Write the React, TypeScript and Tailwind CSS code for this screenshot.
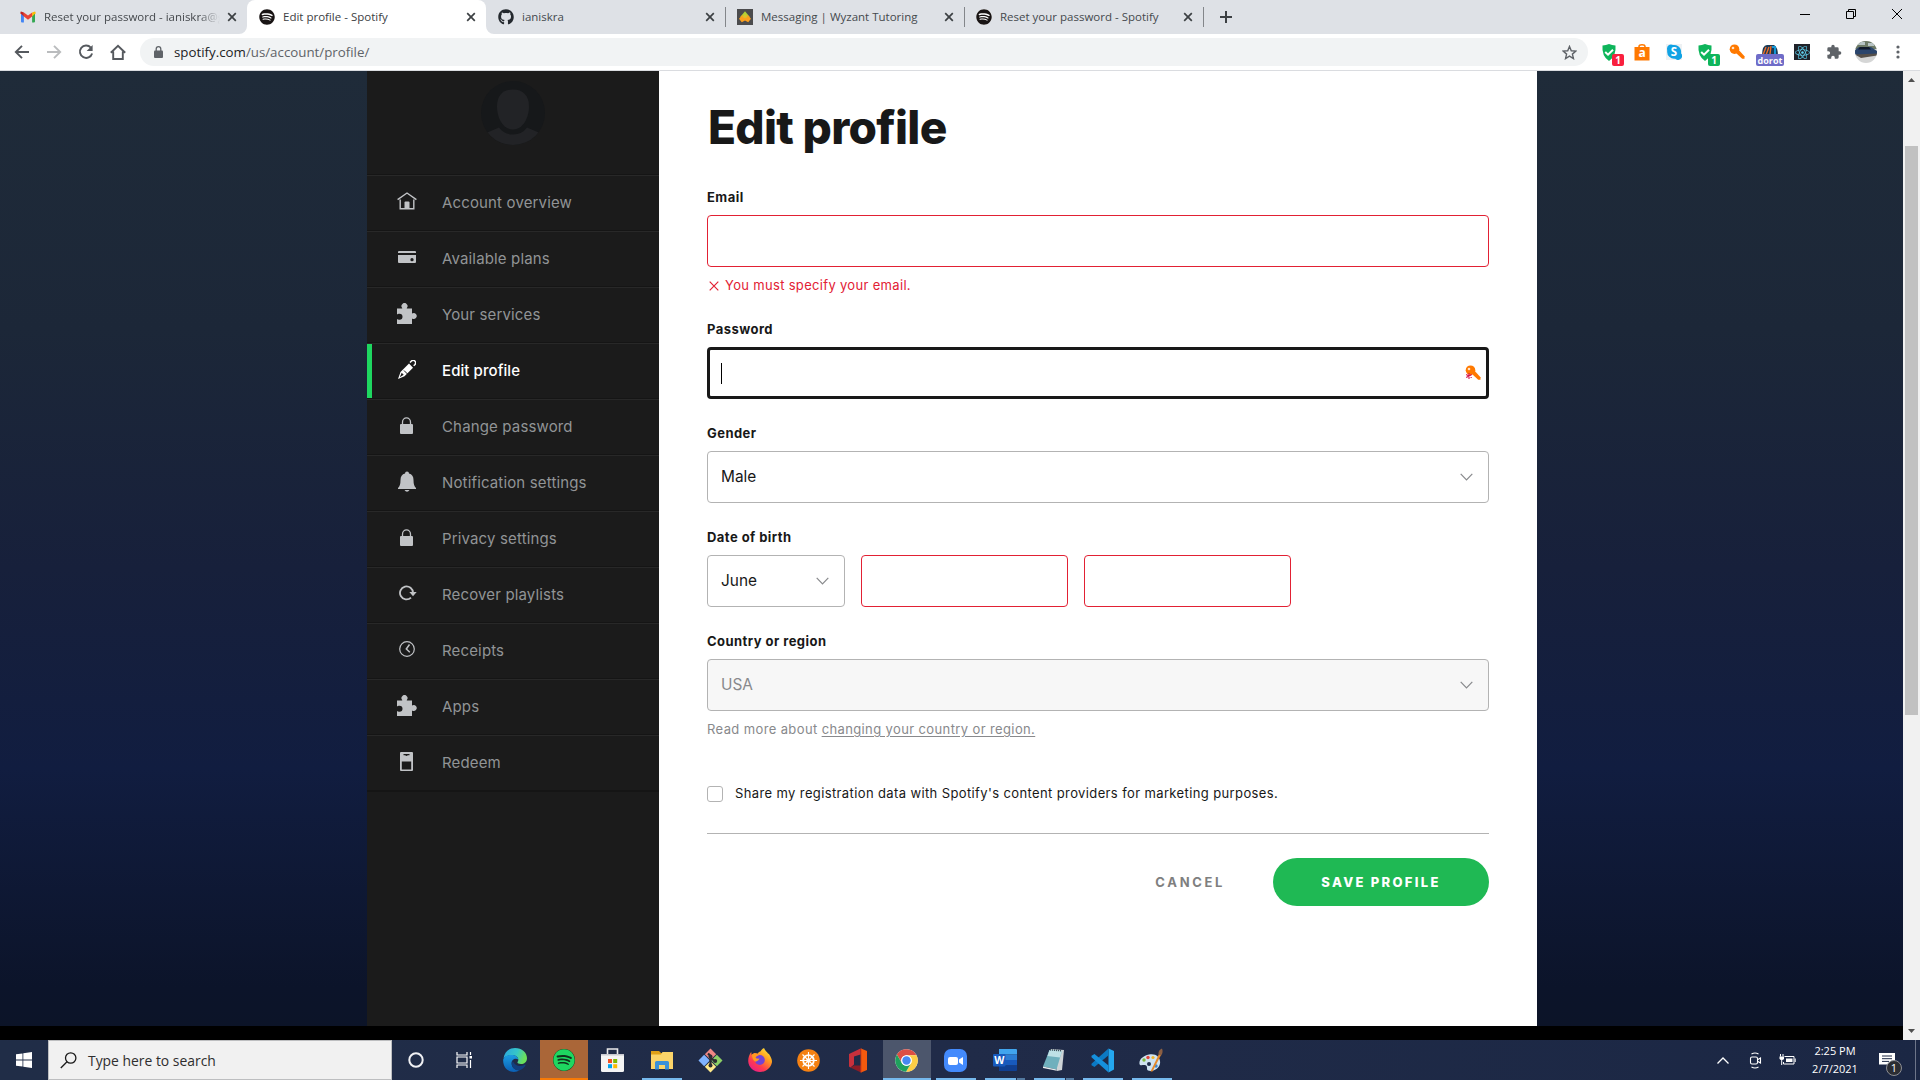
import type { ReactNode } from 'react';
import { FaGithub, FaReact, FaSpotify } from 'react-icons/fa';

/* ---------- browser chrome ---------- */

const GmailIcon = () => (
  <svg width="16" height="16" viewBox="0 0 16 16">
    <path d="M1 4v8.6c0 .5.4.9.9.9h2V7L1 4z" fill="#4285f4" />
    <path d="M15 4v8.6c0 .5-.4.9-.9.9h-2V7L15 4z" fill="#34a853" />
    <path d="M12.1 3.4 15 2.6c.5.3.7.8.5 1.7L12.1 7.6z" fill="#fbbc04" />
    <path d="M3.9 3.4 1 2.6c-.6.4-.6 1-.5 1.7l3.4 3.3z" fill="#c5221f" />
    <path d="M3.9 3.4 8 6.5l4.1-3.1v4.2L8 10.7 3.9 7.6z" fill="#ea4335" />
  </svg>
);

const SpotifyFavicon = () => (
  <span className="grid size-4 place-items-center rounded-full bg-white">
    <FaSpotify className="size-4 text-[#191414]" />
  </span>
);

const WyzantIcon = () => (
  <svg width="16" height="16" viewBox="0 0 16 16">
    <rect width="16" height="16" fill="#4b4b4d" />
    <path d="M8 2.200 12.800 8 8 11 3.200 8z" fill="#b2d235" />
    <path d="M8 7.500l3-1.300 3 3.600-2.800 3.400L8 11.600l-3.200 1.600L2 9.800l3-3.600z" fill="#fb9f1e" />
    <path d="M8 5l2.600 3L8 9.300 5.400 8z" fill="#d8c42c" />
  </svg>
);

const CloseIcon = () => (
  <svg width="10" height="10" viewBox="0 0 10 10" stroke="#3c4043" strokeWidth="1.7">
    <path d="M1.2 1.2l7.6 7.6M8.8 1.2 1.2 8.8" />
  </svg>
);

type TabProps = { icon: ReactNode; title: string; active?: boolean; divider?: boolean };

const Tab = ({ icon, title, active, divider }: TabProps) => (
  <div className={`relative flex h-[34px] w-[239px] items-center pl-3 ${active ? 'rounded-t-lg bg-white' : ''}`}>
    {icon}
    <span className={`ml-2 w-[176px] overflow-hidden text-[11.5px] whitespace-nowrap ${active ? 'text-[#3c4043]' : 'text-[#45494d]'} ${title.length > 30 ? '[mask-image:linear-gradient(to_right,black_88%,transparent)]' : ''}`}>
      {title}
    </span>
    <span className="ml-[7px]"><CloseIcon /></span>
    {divider && <span className="absolute -right-px top-[7px] h-5 w-px bg-[#83868a]" />}
    {active && (
      <>
        <svg className="absolute -left-2 bottom-0" width="8" height="8"><path d="M8 0v8H0a8 8 0 0 0 8-8z" fill="#fff" /></svg>
        <svg className="absolute -right-2 bottom-0" width="8" height="8"><path d="M0 0v8h8a8 8 0 0 1-8-8z" fill="#fff" /></svg>
      </>
    )}
  </div>
);

const TabStrip = () => (
  <div className="flex h-[34px] items-center bg-[#dee1e6] pl-2">
    <Tab icon={<GmailIcon />} title="Reset your password - ianiskra@g" />
    <Tab icon={<SpotifyFavicon />} title="Edit profile - Spotify" active />
    <Tab icon={<FaGithub className="size-4 text-[#24292e]" />} title="ianiskra" divider />
    <Tab icon={<WyzantIcon />} title="Messaging | Wyzant Tutoring" divider />
    <Tab icon={<SpotifyFavicon />} title="Reset your password - Spotify" divider />
    <svg className="ml-[17px]" width="12" height="12" stroke="#3c4043" strokeWidth="2"><path d="M6 0v12M0 6h12" /></svg>
    <div className="mb-[6px] ml-auto mr-[18px] flex items-center gap-9">
      <svg width="10" height="10"><path d="M0 5.5h10" stroke="#000" /></svg>
      <svg width="10" height="10" fill="none" stroke="#000"><path d="M.5 2.5h7v7h-7zM2.5 2.5v-2h7v7h-2" /></svg>
      <svg width="10" height="10" stroke="#000"><path d="M0 0l10 10M10 0 0 10" /></svg>
    </div>
  </div>
);

const ShieldIcon = () => (
  <svg width="16" height="17" viewBox="0 0 16 17">
    <path d="M1.5 1.5Q5 1.4 8 0q3 1.4 6.500 1.500Q15.500 12 8 17 .5 12 1.500 1.500z" fill="#0eb55b" />
    <path d="M4.200 8l2.800 2.700 5-5" fill="none" stroke="#fff" strokeWidth="2" />
  </svg>
);

const KeyIcon = () => (
  <svg width="16" height="16" viewBox="0 0 16 16">
    <circle cx="5.500" cy="5.200" r="4.800" fill="#ff7900" />
    <path d="M7 9l2.800-3 5.700 6.300v2.400h-2.300z" fill="#ff7900" />
    <circle cx="4" cy="4" r="1.300" fill="#ffe3c7" />
  </svg>
);

const Toolbar = () => (
  <div className="flex h-[37px] items-center border-b border-[#dadce0] bg-white">
    <div className="flex w-[140px] items-center gap-4 pl-[14px]">
      <svg width="16" height="16" fill="none" stroke="#55595e" strokeWidth="1.900"><path d="M15 8H2M8 1.800 1.800 8 8 14.200" /></svg>
      <svg width="16" height="16" fill="none" stroke="#babcbe" strokeWidth="1.900"><path d="M1 8h13M8 1.800 14.200 8 8 14.200" /></svg>
      <svg width="16" height="16" fill="none" stroke="#55595e" strokeWidth="1.900"><path d="M12.800 3.600A6.200 6.200 0 1 0 14.100 9.400" /><path d="M14.600 1v6H8.600z" fill="#55595e" stroke="none" /></svg>
      <svg width="16" height="16" fill="none" stroke="#55595e" strokeWidth="1.900"><path d="M.8 8.800 8 1.800l7.200 7M3.200 7.600v7.400h9.600V7.600" /></svg>
    </div>
    <div className="flex h-7 w-[1448px] items-center rounded-full bg-[#f1f3f4] pl-[14px] pr-[11px]">
      <svg width="9" height="12" viewBox="0 0 9 12"><rect y="4.500" width="9" height="7.500" rx="1" fill="#5f6368" /><path d="M2.200 5V3a2.300 2.300 0 0 1 4.600 0v2" fill="none" stroke="#5f6368" strokeWidth="1.300" /></svg>
      <span className="ml-[11px] pt-px text-[13.3px] text-[#5f6368]"><span className="text-[#202124]">spotify.com</span>/us/account/profile/</span>
      <svg className="ml-auto" width="15" height="15" viewBox="0 0 16 16" fill="none" stroke="#5f6368" strokeWidth="1.500"><path d="M8 1.500l1.900 4.600 4.900.4-3.700 3.200 1.100 4.800L8 11.900l-4.200 2.600 1.100-4.800L1.200 6.500l4.900-.4z" /></svg>
    </div>
    <div className="ml-[13px] flex items-center gap-4">
      <div className="relative h-[17px] w-4"><ShieldIcon /><span className="absolute -right-[7px] top-[10px] grid h-3 w-3 place-items-center rounded-[2px] bg-[#f9203e] text-[10px] font-bold leading-none text-white">1</span></div>
      <svg className="ml-px" width="16" height="17" viewBox="0 0 16 17"><path d="M5 5V2.500Q5 .8 8 .8t3 1.700V5" fill="none" stroke="#ff7900" strokeWidth="1.500" /><path d="M.5 3h15v13.500H.5z" fill="#ff7900" /><text x="8" y="13" textAnchor="middle" fill="#fff" fontSize="12" fontWeight="700" fontFamily="Open Sans">a</text></svg>
      <svg width="16" height="16" viewBox="0 0 16 16"><rect width="16" height="16" fill="#eef1f3" /><path d="M1 4.500a4 4 0 0 1 6-3.500 7 7 0 0 1 8 8.200 4 4 0 0 1-5.800 5.500A7 7 0 0 1 1.200 7z" fill="#10a2e4" /><text x="8" y="12" textAnchor="middle" fill="#fff" fontSize="11.500" fontWeight="700" fontFamily="Open Sans">S</text></svg>
      <div className="relative -ml-px h-[17px] w-4"><ShieldIcon /><span className="absolute -right-[7px] top-[10px] grid h-3 w-3 place-items-center rounded-[2px] bg-[#0eb55b] text-[10px] font-bold leading-none text-white">1</span></div>
      <KeyIcon />
      <div className="relative ml-px h-4 w-4">
        <svg width="16" height="12" viewBox="0 0 16 12"><path d="M0 12Q0 1 5 1h7q4 2 4 11z" fill="#193a55" /><path d="M1 11 4 3M4 11l3-8M8 10l1-8" stroke="#ee6c2b" strokeWidth="1.400" /><path d="M10 3h3v7" fill="none" stroke="#1595d3" strokeWidth="2" /></svg>
        <span className="absolute -left-[6px] top-[10px] grid h-3 w-7 place-items-center rounded-[2px] bg-[#6f6cc8] text-[9px] font-bold leading-none text-white">dorot</span>
      </div>
      <span className="grid size-4 place-items-center bg-[#20232a]"><FaReact className="size-[15px] text-[#5fd0ee]" /></span>
      <svg width="16" height="16" viewBox="0 0 24 24" fill="#5f6368"><path d="M20.500 11H19V7a2 2 0 0 0-2-2h-4V3.500a2.500 2.500 0 0 0-5 0V5H4a2 2 0 0 0-2 2v3.800h1.500a2.700 2.700 0 0 1 0 5.400H2V20a2 2 0 0 0 2 2h3.800v-1.500a2.700 2.700 0 0 1 5.400 0V22H17a2 2 0 0 0 2-2v-4h1.500a2.500 2.500 0 0 0 0-5z" /></svg>
      <svg className="ml-[-3px]" width="22" height="22" viewBox="0 0 22 22">
        <defs><clipPath id="avatar"><circle cx="11" cy="11" r="11" /></clipPath></defs>
        <g clipPath="url(#avatar)">
          <rect width="22" height="22" fill="#d5d6d6" /><path d="M0 0h22v8H0z" fill="#6d7a66" /><path d="M3 1h7v3H3zM13 2h6v3h-6z" fill="#b7c3c4" />
          <path d="M0 9l4-3h12l6 4v3L4 15l-4-2z" fill="#2b456c" /><path d="M5 6h9l2 2.500H3z" fill="#10192a" /><path d="M0 13.500l22-1v2L6 17z" fill="#56504a" />
        </g>
      </svg>
      <svg className="ml-[3px]" width="4" height="14" viewBox="0 0 4 14" fill="#5f6368"><circle cx="2" cy="2" r="1.600" /><circle cx="2" cy="7" r="1.600" /><circle cx="2" cy="12" r="1.600" /></svg>
    </div>
  </div>
);

/* ---------- account sidebar ---------- */

const HomeGlyph = () => (
  <svg width="20" height="18" viewBox="0 0 20 18" fill="none" stroke="currentColor" strokeWidth="1.400">
    <path d="M.6 7.600 10 1l9.400 6.600M3.200 7.500v9.300h13.600V7.500" /><path d="M7.500 16.500v-6q0-1 1-1h3q1 0 1 1v6z" fill="currentColor" stroke="none" />
  </svg>
);
const CardGlyph = () => (
  <svg width="18" height="12" viewBox="0 0 18 12" fill="currentColor">
    <path d="M1 0h16q1 0 1 1v1H0V1q0-1 1-1z" /><path fillRule="evenodd" d="M0 4h18v7q0 1-1 1H1q-1 0-1-1zm14 3a1.600 1.600 0 1 0 .01 3.300A1.600 1.600 0 0 0 14 7z" />
  </svg>
);
const PuzzleGlyph = () => (
  <svg width="20" height="21" viewBox="0 0 20 21" fill="currentColor">
    <path d="M0 5.500h5.200V5A3 3 0 1 1 9.800 5v.5H15v5a3 3 0 1 1 0 5V21H0v-5q1 1 2.500.8a3 3 0 0 0 0-6Q1 10.500 0 11.500z" />
  </svg>
);
const PencilGlyph = () => (
  <svg width="18" height="19" viewBox="0 0 18 19">
    <path d="M0 19l2.500-7L11 3.500l4 4.200-8.500 8.500z" fill="currentColor" /><path d="M1.800 17.200l1.900-4.400 2 2z" fill="#1b1b1b" />
    <path d="M12 2.500l1.500-1.500q1.700-1.500 3.300 0 1.700 1.700.2 3.500l-1.300 1.300" fill="none" stroke="currentColor" strokeWidth="1.500" /><path d="M6 10.500 9.500 14" stroke="#1b1b1b" />
  </svg>
);
const LockGlyph = () => (
  <svg className="-ml-px" width="13" height="17" viewBox="0 0 13 17"><path d="M2.500 8V5.200a4 4.300 0 0 1 8 0V8" fill="none" stroke="currentColor" strokeWidth="1.300" /><rect y="7" width="13" height="10" rx="1" fill="currentColor" /></svg>
);
const BellGlyph = () => (
  <svg width="18" height="21" viewBox="0 0 18 21" fill="currentColor"><path d="M7 2.500a2 2 0 1 1 4 0q4.500 1.200 4.500 6.500 0 6 2.500 8v1H0v-1q2.500-2 2.500-8Q2.500 3.700 7 2.500z" /><path d="M6.500 19h5q-1 1.800-2.500 1.800T6.500 19z" /></svg>
);
const RecoverGlyph = () => (
  <svg className="ml-[2px]" width="18" height="16" viewBox="0 0 18 16"><path d="M12 12.600A6.500 6.500 0 1 1 14 8" fill="none" stroke="currentColor" strokeWidth="1.800" /><path d="M10.300 7h7.400L14 11.300z" fill="currentColor" /></svg>
);
const ClockGlyph = () => (
  <svg width="16" height="16" viewBox="0 0 16 16" fill="none" stroke="currentColor"><circle cx="8" cy="8" r="7.300" strokeWidth="1.200" /><path d="M10.500 3.500 7.300 8l3.500 3.300" strokeWidth="1.500" /></svg>
);
const RedeemGlyph = () => (
  <svg className="-ml-px" width="13" height="19" viewBox="0 0 13 19"><path fillRule="evenodd" d="M1 0h11q1 0 1 1v17q0 1-1 1H1q-1 0-1-1V1q0-1 1-1zm.8 9.500v8h9.400v-8zM3.500 2v1.200h1.700q1.300 1.500 2.600 0h1.700V2z" fill="currentColor" /></svg>
);

const navItems: { label: string; icon: ReactNode; active?: boolean }[] = [
  { label: 'Account overview', icon: <HomeGlyph /> },
  { label: 'Available plans', icon: <CardGlyph /> },
  { label: 'Your services', icon: <PuzzleGlyph /> },
  { label: 'Edit profile', icon: <PencilGlyph />, active: true },
  { label: 'Change password', icon: <LockGlyph /> },
  { label: 'Notification settings', icon: <BellGlyph /> },
  { label: 'Privacy settings', icon: <LockGlyph /> },
  { label: 'Recover playlists', icon: <RecoverGlyph /> },
  { label: 'Receipts', icon: <ClockGlyph /> },
  { label: 'Apps', icon: <PuzzleGlyph /> },
  { label: 'Redeem', icon: <RedeemGlyph /> },
];

const Sidebar = () => (
  <aside className="flex w-[292px] flex-col bg-[#1b1b1b]">
    <div className="flex h-[104px] justify-center border-b border-[#151515] pt-[10px]">
      <svg width="64" height="64" viewBox="0 0 64 64">
        <defs><clipPath id="user"><circle cx="32" cy="32" r="32" /></clipPath></defs>
        <circle cx="32" cy="32" r="32" fill="#16181a" />
        <g clipPath="url(#user)" fill="#222326"><path d="M32 8.500c10 0 16 6 16 17S42 48.500 32 48.500 16 37 16 25.500s6-17 16-17z" /><path d="M18 46.500q5 7 14 7t14-7l14 6v14H4v-14z" /></g>
      </svg>
    </div>
    <nav className="border-b border-[#151515]">
      {navItems.map(({ label, icon, active }) => (
        <a key={label} className={`flex h-14 items-center border-t border-t-[#282828] border-b border-b-[#151515] text-[15px] tracking-[0.15px] ${active ? 'text-white' : 'text-[#919496]'}`}>
          <span className={`h-[54px] w-[5px] ${active ? 'bg-[#1ed760]' : ''}`} />
          <span className={`ml-[15px] grid w-10 place-items-center pb-1 ${active ? 'text-white' : 'text-[#c1c3c6]'}`}>{icon}</span>
          <span className={`ml-[15px] ${active ? 'font-medium tracking-[0.080px]' : ''}`}>{label}</span>
        </a>
      ))}
    </nav>
  </aside>
);

/* ---------- profile form ---------- */

const Label = ({ children }: { children: string }) => (
  <div className="mb-[9px] h-[18px] text-[13px] font-bold leading-[18px] tracking-[0.45px] text-[#181818]">{children}</div>
);

const Chevron = () => (
  <svg width="13" height="8" viewBox="0 0 13 8" fill="none" stroke="#88898c" strokeWidth="1.200"><path d="M.7.8l5.800 6 5.800-6" /></svg>
);

const Select = ({ value, className = '' }: { value: string; className?: string }) => (
  <div className={`flex h-[52px] items-center justify-between rounded-[4px] border border-[#b3b3b3] pl-[13px] pr-[15px] text-[15.400px] ${className}`}>
    {value}<Chevron />
  </div>
);

const ProfileForm = () => (
  <main className="w-[878px] bg-white px-12 text-[#181818]">
    <h1 className="mt-[26px] h-[60px] pl-[1px] text-[46px] font-extrabold leading-[60px] tracking-[-0.700px]">Edit profile</h1>
    <div className="mt-[31px]">
      <Label>Email</Label>
      <div className="h-[52px] rounded-[4px] border border-[#e22134]" />
      <div className="mt-[9px] flex h-[18px] items-center text-[13px] leading-[18px] tracking-[0.32px] text-[#e22134]">
        <svg className="ml-[2px] mr-[6px] mt-px" width="10" height="10" stroke="currentColor" strokeWidth="1.200"><path d="M.7.7l8.600 8.600M9.300.7.7 9.300" /></svg>
        You must specify your email.
      </div>
    </div>
    <div className="mt-[26px]">
      <Label>Password</Label>
      <div className="flex h-[52px] items-center justify-between rounded-[4px] border-3 border-[#181818] pl-[11px] pr-[5px]">
        <span className="h-[21px] w-px bg-black" />
        <span className="relative"><KeyIcon /><svg className="absolute bottom-[1px] left-0" width="8" height="8" stroke="#d5134a" strokeWidth="1.100"><path d="M4 1v6M1.200 2.500l5.600 3M6.800 2.500l-5.600 3" /></svg></span>
      </div>
    </div>
    <div className="mt-[25px]"><Label>Gender</Label><Select value="Male" /></div>
    <div className="mt-[25px]">
      <Label>Date of birth</Label>
      <div className="flex gap-4">
        <Select value="June" className="w-[138px]" />
        <div className="h-[52px] w-[207px] rounded-[4px] border border-[#e22134]" />
        <div className="h-[52px] w-[207px] rounded-[4px] border border-[#e22134]" />
      </div>
    </div>
    <div className="mt-[25px]">
      <Label>Country or region</Label>
      <Select value="USA" className="bg-[#f7f7f7] text-[#88898c]" />
      <p className="mt-[9px] h-[18px] text-[13px] leading-[18px] tracking-[0.38px] text-[#88898c]">Read more about <a className="underline underline-offset-2">changing your country or region.</a></p>
    </div>
    <div className="mt-[46px] flex h-[18px] items-center">
      <span className="mt-px size-4 rounded-[3px] border border-[#b3b3b3]" />
      <span className="ml-3 text-[13px] leading-[18px] tracking-[0.38px]">Share my registration data with Spotify's content providers for marketing purposes.</span>
    </div>
    <div className="mt-[31px] flex justify-end border-t border-[#b3b3b3] pt-6 text-[13px] font-bold">
      <span className="mr-[48px] leading-[48px] tracking-[2.650px] text-[#7f7f7f]">CANCEL</span>
      <button className="h-12 w-[216px] rounded-full bg-[#1fb954] pt-px font-extrabold tracking-[2.300px] text-white">SAVE PROFILE</button>
    </div>
  </main>
);

const Scrollbar = () => (
  <div className="flex h-full w-[17px] flex-col items-center bg-[#f1f1f1]">
    <svg className="mt-[7px]" width="7" height="4"><path d="M3.500 0 7 4H0z" fill="#505050" /></svg>
    <span className="mt-[64px] h-[569px] w-[13px] bg-[#c1c1c1]" />
    <svg className="mb-[7px] mt-auto" width="7" height="4"><path d="M0 0h7L3.500 4z" fill="#505050" /></svg>
  </div>
);

/* ---------- taskbar ---------- */

const EdgeLogo = () => (
  <svg width="24" height="24" viewBox="0 0 24 24">
    <defs>
      <linearGradient id="e1" x1="0" y1="0" x2="1" y2="0.300"><stop offset="0" stopColor="#2aa5e0" /><stop offset=".6" stopColor="#36c6c8" /><stop offset="1" stopColor="#6be05a" /></linearGradient>
      <linearGradient id="e2" x1="0" y1="0" x2="0" y2="1"><stop offset="0" stopColor="#1b9de2" /><stop offset="1" stopColor="#0b5fb4" /></linearGradient>
    </defs>
    <path d="M.5 10.500C1.500 4 6.200 0 12 0c7 0 12 4.800 12 10.200 0 3.600-2.800 5.800-6 5.800-2.200 0-3.600-.8-3.600-1.700 0-.6.900-1 .9-2.600C15.300 9.200 12.500 7 9 7 5 7 1.500 8.500.5 10.500z" fill="url(#e1)" />
    <path d="M.2 11.500C1 8.500 4.600 7 8.500 7c3.800 0 6.500 2 6.800 4.500C12 9.500 8.500 12 8.500 15.500c0 4 4.500 7.500 8.500 6.500-7 4.800-17.500.5-16.800-10.500z" fill="url(#e2)" />
    <path d="M9.800 13c-2.800 5.500 2 10.200 7 9.200 3-1 4.800-3 5.700-4.900.3-.6-.3-1-.8-.6-4.500 2.700-9.700 1.500-11.900-3.700z" fill="#123f7e" />
  </svg>
);

const StoreLogo = () => (
  <svg width="23" height="24" viewBox="0 0 23 24">
    <path d="M6.500 7V1h10v6" fill="none" stroke="#e9e9ea" strokeWidth="1.600" /><path d="M0 6h23v16.500q0 1.500-1.500 1.500h-20Q0 24 0 22.500z" fill="#f4f4f4" /><path d="M0 6h23v1.500H0z" fill="#c9cad1" />
    <path d="M7 11h4v4H7z" fill="#f25022" /><path d="M12.200 11h4v4h-4z" fill="#7fba00" /><path d="M7 16.200h4v4H7z" fill="#00a4ef" /><path d="M12.200 16.200h4v4h-4z" fill="#ffb900" />
  </svg>
);

const ExplorerLogo = () => (
  <svg width="22" height="19" viewBox="0 0 22 19">
    <path d="M0 0h8l2 2h12v3H0z" fill="#dfa018" /><path d="M0 3.500h10L11.500 1H22v17H0z" fill="#fbd469" /><path d="M4 18.500v-7q0-1.500 1.500-1.500h11q1.500 0 1.500 1.500v7h-4V14H8v4.500z" fill="#3a91d9" />
  </svg>
);

const GitLogo = () => (
  <svg width="25" height="25" viewBox="0 0 25 25">
    <g transform="rotate(45 12.500 12.500)"><path d="M4 4h8v8H4z" fill="#ee8784" /><path d="M13 4h8v8h-8z" fill="#8ccf66" /><path d="M4 13h8v8H4z" fill="#80b3ff" /><path d="M13 13h8v8h-8z" fill="#ffe98a" /></g>
    <path d="M10 5.500l2.500 2.500v9.500M12.500 9.500l4.500 4" stroke="#2c2c33" strokeWidth="2.200" fill="none" /><circle cx="12.500" cy="8.500" r="2" fill="#2c2c33" /><circle cx="12.500" cy="17.500" r="2" fill="#2c2c33" /><circle cx="17.200" cy="13" r="2" fill="#2c2c33" />
  </svg>
);

const FirefoxLogo = () => (
  <svg width="24" height="24" viewBox="0 0 24 24">
    <defs><linearGradient id="ff" x1="0.900" y1="0" x2="0.200" y2="1"><stop offset="0" stopColor="#fff13f" /><stop offset=".35" stopColor="#ffa21f" /><stop offset=".7" stopColor="#ff3b4f" /><stop offset="1" stopColor="#e81a8c" /></linearGradient></defs>
    <path d="M16 0c1 3 3 3.500 4 5.500l1 .5c2 3 3 5.500 3 8-1 6-6 10-12 10S.3 19.500.2 13c0-3.500 1-6.500 3-9l.5 3c2-3 4-2 6-1.500 1-1.500 2-2 3-2.300C13 2.500 14 1 16 0z" fill="url(#ff)" />
    <circle cx="11.800" cy="12" r="5" fill="#7443d4" /><path d="M4 6.500c3-1.500 5.500-.8 7 .5-1 1-3 1-3.500 2.500 1 1.500 3.500 1.300 4 .8-1 3-3 2.700-3.500 3.500-2-.5-4-3-4-7.300z" fill="#ff9b1f" />
  </svg>
);

const WheelLogo = () => (
  <svg width="23" height="25" viewBox="0 0 23 23" fill="none" stroke="#fff">
    <circle cx="11.500" cy="11.500" r="11.300" fill="#f58112" stroke="none" /><circle cx="11.500" cy="11.500" r="5.300" strokeWidth="1.800" /><circle cx="11.500" cy="11.500" r="1.800" fill="#fff" />
    <path d="M11.500 3v17M3 11.500h17M5.500 5.500l12 12M17.500 5.500l-12 12" strokeWidth="1.100" />
  </svg>
);

const OfficeLogo = () => (
  <svg width="18" height="25" viewBox="0 0 18 24">
    <path d="M12 0l6 2.500v19L12 24z" fill="#f35a0e" /><path d="M0 5.500 11.500 0v6L5 8v8l-3.500 3L0 18z" fill="#c8303c" /><path d="M1.500 19 5 17h7v7z" fill="#8c1c26" /><path d="M11.500 0h1v24h-1z" fill="#d63c12" />
  </svg>
);

const ChromeLogo = () => (
  <svg width="23" height="23" viewBox="0 0 48 48">
    <circle cx="24" cy="24" r="23.500" fill="#fff" />
    <path d="M24 13h20.800A23.500 23.500 0 0 0 3.900 11.700L14.500 29.500A11 11 0 0 1 24 13z" fill="#dd4f43" />
    <path d="M33.500 29.500 23 47.500A23.500 23.500 0 0 0 44.800 13H24a11 11 0 0 1 9.500 16.500z" fill="#fdce45" />
    <path d="M14.500 29.500 3.900 11.700A23.500 23.500 0 0 0 23 47.500l10.500-18a11 11 0 0 1-19 0z" fill="#1fa15d" />
    <circle cx="24" cy="24" r="11" fill="#fff" /><circle cx="24" cy="24" r="8.800" fill="#4688f1" />
  </svg>
);

const ZoomLogo = () => (
  <svg width="23" height="23" viewBox="0 0 23 23"><rect width="23" height="23" rx="7" fill="#438afc" /><rect x="4" y="8" width="10" height="8" rx="2" fill="#fff" /><path d="M15 10.500 19 8v8l-4-2.500z" fill="#fff" /></svg>
);

const WordLogo = () => (
  <svg width="24" height="22" viewBox="0 0 24 22">
    <path d="M6 0h17q1 0 1 1v4.500H6z" fill="#41a5ee" /><path d="M6 5.500h18V11H6z" fill="#2b7cd3" /><path d="M6 11h18v5.500H6z" fill="#185abd" /><path d="M6 16.500h18V21q0 1-1 1H6z" fill="#103f91" />
    <rect y="5" width="12.500" height="12.500" rx="1" fill="#185abd" /><text x="6.250" y="15" textAnchor="middle" fontSize="10.500" fontWeight="700" fontFamily="Open Sans" fill="#fff">W</text>
  </svg>
);

const NotepadLogo = () => (
  <svg width="24" height="24" viewBox="0 0 24 24">
    <path d="M9 1l13 1-2 20-5 1z" fill="#cdd3d6" /><path d="M7.500 2 20 3l-5.500 18.500L1 18.500z" fill="#6fb0bd" /><path d="M7.500 2 20 3l-2 6.500L5.500 8z" fill="#bfe1e6" /><path d="M1 18.500l13.500 3 .3 1.300L1 20z" fill="#e8edef" /><path d="M8 1.800l12 1" stroke="#3d4f57" strokeWidth="1.600" strokeDasharray="1 1" />
  </svg>
);

const VsCodeLogo = () => (
  <svg width="24" height="25" viewBox="0 0 24 25">
    <path d="M17.500.5 23 3v18.500l-5.500 3z" fill="#24a7ef" /><path d="M17.500.5v6.800L3.500 19 .5 17.200v-1.500z" fill="#0b79c4" /><path d="M.5 9.300v-1.500L3.500 6l14 11.500v7z" fill="#1590dc" />
  </svg>
);

const PaintLogo = () => (
  <svg width="25" height="25" viewBox="0 0 25 25">
    <path d="M10 6.500c7-1.500 12 3 11 9s-8 8.500-12 7c-2-1 0-3.500-2-5s-6 1-6.500-1.500C-.2 11.500 4 7.800 10 6.500z" fill="#cfe3f1" />
    <circle cx="5" cy="12" r="1.700" fill="#7fb93c" /><circle cx="9" cy="9.500" r="1.700" fill="#e0453a" /><circle cx="14" cy="9.500" r="1.600" fill="#f0b429" /><circle cx="10" cy="16" r="2" fill="#20304c" /><circle cx="17" cy="18" r="1.700" fill="#3a86d0" />
    <path d="M11.500 23.500 20 6l2 1-8.500 16.500z" fill="#e5892b" /><path d="M19.500 6.500Q19 2 23 .5q1.500 3.500-.8 7z" fill="#8b5f43" />
  </svg>
);

type TaskIcon = { name: string; icon: ReactNode; state?: 'open' | 'stacked' | 'active' | 'alert' };

const taskIcons: TaskIcon[] = [
  { name: 'edge', icon: <EdgeLogo /> },
  { name: 'spotify', icon: <span className="grid size-[22px] place-items-center rounded-full bg-[#10321c]"><FaSpotify className="size-[22px] text-[#1ed760]" /></span>, state: 'alert' },
  { name: 'store', icon: <StoreLogo /> },
  { name: 'explorer', icon: <ExplorerLogo />, state: 'open' },
  { name: 'git', icon: <GitLogo /> },
  { name: 'firefox', icon: <FirefoxLogo /> },
  { name: 'wheel', icon: <WheelLogo /> },
  { name: 'office', icon: <OfficeLogo /> },
  { name: 'chrome', icon: <ChromeLogo />, state: 'active' },
  { name: 'zoom', icon: <ZoomLogo />, state: 'open' },
  { name: 'word', icon: <WordLogo />, state: 'stacked' },
  { name: 'notepad', icon: <NotepadLogo />, state: 'stacked' },
  { name: 'vscode', icon: <VsCodeLogo />, state: 'open' },
  { name: 'paint', icon: <PaintLogo />, state: 'open' },
];

const cellBg = { open: '', stacked: '', active: 'bg-[#4c566c]', alert: 'bg-[#aa6638]' };

const TaskCell = ({ icon, state }: TaskIcon) => (
  <div className={`flex h-10 w-12 flex-col items-center ${state ? cellBg[state] : ''}`}>
    <div className="grid h-[38px] place-items-center pt-[2px] pr-px">{icon}</div>
    {state === 'open' && <span className="h-[2px] w-10 bg-[#76b9ed]" />}
    {state === 'active' && <span className="h-[2px] w-12 bg-[#76b9ed]" />}
    {state === 'alert' && <span className="h-[2px] w-12 bg-[#f77a07]" />}
    {state === 'stacked' && <span className="flex h-[2px] w-10"><i className="w-[31px] bg-[#76b9ed]" /><i className="ml-px w-2 bg-[#53799f]" /></span>}
  </div>
);

const Taskbar = () => (
  <div className="flex h-10 bg-linear-to-r from-[#202d47] via-[#202b48] to-[#1b2744] text-white">
    <div className="grid w-12 place-items-center">
      <svg width="16" height="16" viewBox="0 0 16 16" fill="#fff"><path d="M0 2.300 6.500 1.400v6.200H0zM7.300 1.300 16 0v7.600H7.300zM0 8.400h6.500v6.200L0 13.700zM7.300 8.400H16V16l-8.700-1.300z" /></svg>
    </div>
    <div className="flex w-[344px] items-center border border-[#bdbec0] bg-[#f1f1f1] pl-[11px]">
      <svg width="17" height="17" viewBox="0 0 17 17" fill="none" stroke="#1a1a1a" strokeWidth="1.300"><circle cx="10.700" cy="6" r="5.200" /><path d="M7 9.800.8 16" /></svg>
      <span className="ml-[11px] pt-[2px] text-[13.900px] text-[#2e2e2e]">Type here to search</span>
    </div>
    <div className="grid w-12 place-items-center"><svg width="16" height="16"><circle cx="8" cy="8" r="6.700" fill="none" stroke="#f0f1f4" strokeWidth="2" /></svg></div>
    <div className="grid w-12 place-items-center">
      <svg width="17" height="16" fill="none" stroke="#fff" strokeWidth="1.200"><path d="M1 0v3h10V0M1 16v-3h10v3M1 5h10v6H1zM14.500 0v3M14.500 8v8" /><path d="M13.500 4h2.500v2.500h-2.500z" fill="#fff" stroke="none" /></svg>
    </div>
    <div className="ml-[3px] flex gap-px">{taskIcons.map((t) => <TaskCell key={t.name} {...t} />)}</div>
    <div className="ml-auto flex items-center">
      <svg width="12" height="7" fill="none" stroke="#fff" strokeWidth="1.300"><path d="M.5 6.500 6 1l5.500 5.500" /></svg>
      <svg className="ml-[20px]" width="13" height="17" viewBox="0 0 13 17" fill="none" stroke="#fff" strokeWidth="1.100"><rect x="1.500" y="5" width="7" height="7" rx="1.500" /><path d="M9 7.500l2.500-1.500v5L9 9.500M2.500 2q3.500-2 7 0M2.500 15q3.500 2 7 0" /></svg>
      <svg className="ml-[17px]" width="17" height="12" viewBox="0 0 17 12" fill="none" stroke="#fff"><path d="M5.500 2.500h9.500v7.500H4.500v-2M16.200 4.500v3.500" /><path d="M7 4.500h6.500V8H7z" fill="#fff" stroke="none" /><path d="M1.500 0v2.500M4 0v2.500M2.700 6v5" /><path d="M.5 2.500h4.500v2q0 1.500-2.200 1.500T.5 4.500z" fill="#fff" stroke="none" /></svg>
      <div className="ml-[12px] w-[54px] text-center text-[11px] leading-[18px]">2:25 PM<br />2/7/2021</div>
      <div className="relative ml-[17px] h-[17px] w-4">
        <svg width="16" height="16"><path d="M0 1h16v11.500h-5L8 16v-3.500H0z" fill="#fff" /><path d="M3 4h10M3 6.700h10M3 9.400h7" stroke="#1d2945" /></svg>
        <span className="absolute left-[7px] top-[8px] grid size-4 place-items-center rounded-full border border-[#8d8f94] bg-[#2b2d33] text-[11px] leading-none">1</span>
      </div>
      <span className="ml-5 mr-1 h-10 w-px bg-[#6d7589]" />
    </div>
  </div>
);

export default function App() {
  return (
    <div className="flex h-[1080px] w-[1920px] flex-col overflow-hidden bg-black font-['Open_Sans','Noto_Sans',sans-serif]">
      <TabStrip />
      <Toolbar />
      <div className="flex h-[969px]">
        <div className="flex h-[955px] w-[1903px] bg-[linear-gradient(to_bottom,#1f2b39_0%,#1c2738_27%,#17203b_52%,#111d40_73%,#0c142a_96%,#0c1428_100%)] pl-[367px] font-['Inter','Open_Sans',sans-serif]">
          <Sidebar />
          <ProfileForm />
        </div>
        <Scrollbar />
      </div>
      <Taskbar />
    </div>
  );
}
